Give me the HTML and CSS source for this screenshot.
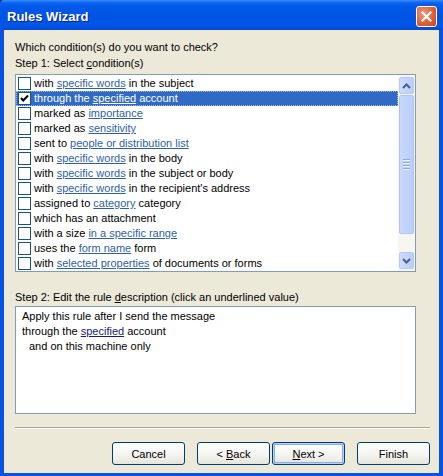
FILE: index.html
```html
<!DOCTYPE html>
<html>
<head>
<meta charset="utf-8">
<link rel="stylesheet" href="styles.css">
</head>
<body>
<div class="window">
  <div class="titlebar">
    <span class="title">Rules Wizard</span>
    <span class="close"><svg width="19" height="19" viewBox="0 0 19 19"><path d="M5.5 5.5 L13.5 13.5 M13.5 5.5 L5.5 13.5" stroke="#fff" stroke-width="2.2" stroke-linecap="square"/></svg></span>
  </div>
  <div class="frame">
    <div class="client">
      <div class="label">Which condition(s) do you want to check?</div>
      <div class="label">Step 1: Select <u>c</u>ondition(s)</div>
      <div class="listbox">
        <div class="rows">
          <div class="row"><span class="cb"></span><span>with <a>specific words</a> in the subject</span></div>
          <div class="row sel"><span class="cb"><svg width="11" height="11" viewBox="0 0 11 11"><path d="M2 5 L4.3 7.5 L9 2.5" stroke="#000" stroke-width="2" fill="none"/></svg></span><span>through the <a>specified</a> account</span></div>
          <div class="row"><span class="cb"></span><span>marked as <a>importance</a></span></div>
          <div class="row"><span class="cb"></span><span>marked as <a>sensitivity</a></span></div>
          <div class="row"><span class="cb"></span><span>sent to <a>people or distribution list</a></span></div>
          <div class="row"><span class="cb"></span><span>with <a>specific words</a> in the body</span></div>
          <div class="row"><span class="cb"></span><span>with <a>specific words</a> in the subject or body</span></div>
          <div class="row"><span class="cb"></span><span>with <a>specific words</a> in the recipient's address</span></div>
          <div class="row"><span class="cb"></span><span>assigned to <a>category</a> category</span></div>
          <div class="row"><span class="cb"></span><span>which has an attachment</span></div>
          <div class="row"><span class="cb"></span><span>with a size <a>in a specific range</a></span></div>
          <div class="row"><span class="cb"></span><span>uses the <a>form name</a> form</span></div>
          <div class="row"><span class="cb"></span><span>with <a>selected properties</a> of documents or forms</span></div>
        </div>
        <div class="scrollbar">
          <div class="sbtn"><svg width="9" height="6" viewBox="0 0 9 6"><path d="M1 5 L4.5 1.5 L8 5" stroke="#4D6185" stroke-width="2" fill="none"/></svg></div>
          <div class="thumb"><span class="grip"></span><span class="grip"></span><span class="grip"></span><span class="grip"></span></div>
          <div class="track"></div>
          <div class="sbtn"><svg width="9" height="6" viewBox="0 0 9 6"><path d="M1 1 L4.5 4.5 L8 1" stroke="#4D6185" stroke-width="2" fill="none"/></svg></div>
        </div>
      </div>
      <div class="label step2">Step 2: Edit the rule <u>d</u>escription (click an underlined value)</div>
      <div class="desc">
        <div>Apply this rule after I send the message</div>
        <div>through the <a>specified</a> account</div>
        <div class="indent">and on this machine only</div>
      </div>
      <div class="sep"></div>
      <div class="buttons">
        <button class="btn cancel">Cancel</button>
        <button class="btn back">&lt; <u>B</u>ack</button>
        <button class="btn next"><u>N</u>ext &gt;</button>
        <button class="btn finish">Finish</button>
      </div>
    </div>
  </div>
</div>
</body>
</html>
```

FILE: styles.css
```css
html, body { margin: 0; padding: 0; background: #0A246A; }
body { font-family: "Liberation Sans", Arial, sans-serif; font-size: 11px; color: #000; }
.window { width: 443px; height: 476px; display: flex; flex-direction: column; }
.titlebar {
  height: 30px; display: flex; align-items: center; justify-content: space-between;
  background: linear-gradient(#3A8CFF 0px, #0A62EE 3px, #0058E8 7px, #0054E3 18px, #0056E8 25px, #004AD8 30px);
  border-radius: 4px 0 0 0; padding: 0 6px 0 7px;
}
.title { color: #fff; font-weight: bold; font-size: 13px; text-shadow: 1px 1px 0 #0A1E8C; position: relative; top: 1px; }
.close {
  width: 19px; height: 19px; border: 1px solid #fff; border-radius: 3px;
  background: radial-gradient(circle at 35% 35%, #F09A7C, #E0603A 55%, #C74420);
  display: flex; align-items: center; justify-content: center; position: relative; top: 1px;
}
.close svg { display: block; }
.frame { flex: 1; background: #0752E2; padding: 0 4px 3px 4px; display: flex; }
.client { flex: 1; background: #ECE9D8; padding: 9px 9px 8px 11px; display: flex; flex-direction: column; }
.label { line-height: 16px; height: 16px; white-space: nowrap; }
.listbox {
  margin-top: 3px; width: 399px; height: 196px; border: 1px solid #7F9DB9; background: #fff;
  display: flex;
}
.rows { flex: 1; padding-top: 1px; }
.row { height: 15px; line-height: 15px; display: flex; align-items: center; white-space: nowrap; }
.row a { color: #2F5FA8; text-decoration: underline; }
.cb {
  width: 11px; height: 11px; border: 1px solid #1C5180; background: #fff; margin: 0 3px 0 2px;
  display: flex; align-items: center; justify-content: center; flex: none;
}
.cb svg { display: block; }
.row.sel { background: #316AC5; color: #fff; outline: 1px dotted #9DB5E0; outline-offset: -1px; }
.row.sel a { color: #fff; }
.scrollbar { width: 17px; display: flex; flex-direction: column; background: #F7F6F0; padding: 1px 0; box-sizing: border-box; }
.sbtn {
  height: 15px; margin: 1px 1px; border: 1px solid #B7C9F5; border-radius: 2px;
  background: linear-gradient(90deg, #CDDBFE, #BBCDFC);
  display: flex; align-items: center; justify-content: center;
}
.sbtn svg { display: block; }
.thumb {
  height: 137px; margin: 0 1px; border: 1px solid #AFC4F5; border-radius: 2px;
  background: linear-gradient(90deg, #C8D8FE, #BACDFC);
  display: flex; flex-direction: column; align-items: center; justify-content: center; gap: 1px;
}
.grip { width: 7px; height: 1px; background: #8EA6E6; border-bottom: 1px solid #EEF3FF; }
.track { flex: 1; }
.step2 { margin-top: 17px; }
.desc {
  margin-top: 1px; width: 393px; height: 104px; border: 1px solid #7F9DB9; background: #fff;
  padding: 2px 0 0 6px; line-height: 15px;
}
.desc a { color: #1A1A7C; text-decoration: underline; }
.desc .indent { padding-left: 7px; }
.sep { margin-top: 13px; height: 1px; border-top: 1px solid #ACA899; background: #fff; width: 415px; }
.buttons { margin-top: 13px; display: flex; justify-content: flex-end; }
.btn {
  width: 73px; height: 23px; font-family: "Liberation Sans", Arial, sans-serif; font-size: 11px;
  border: 1px solid #003C74; border-radius: 3px; padding: 0; color: #000;
  background: linear-gradient(#FFFFFF, #F3F3EF 60%, #E6E4DA);
}
.back { margin-left: 12px; }
.next { margin-left: 2px; box-shadow: inset 0 0 0 1px #BCD0F4, inset 0 0 0 2px #89ADE4; }
.finish { margin-left: 12px; }
```
